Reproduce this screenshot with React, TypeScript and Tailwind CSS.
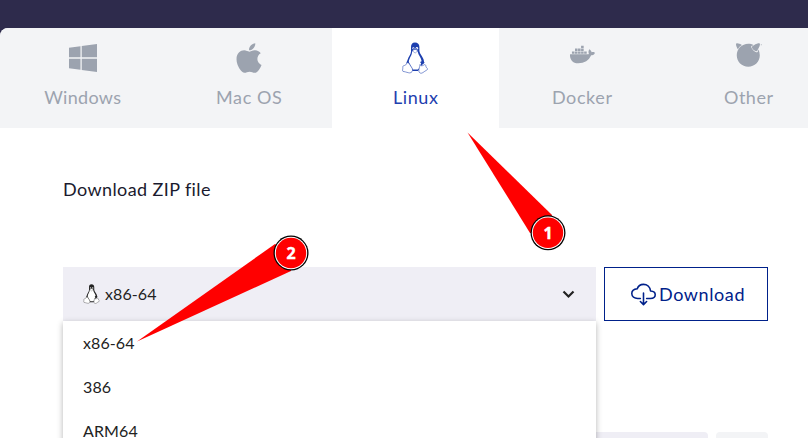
import type { ReactNode } from 'react';
import { FaApple, FaDocker, FaWindows } from 'react-icons/fa';
import { SiFreebsd } from 'react-icons/si';
import { IoCloudDownloadOutline } from 'react-icons/io5';

function Tux({ className }: { className: string }) {
  return (
    <svg viewBox="0 0 26 32" className={className} fill="none">
      <path
        fill="currentColor"
        d="M13 .4C10.300 .4 9 2.200 9 5v4.500c0 3-2.500 5-3.500 8.500L4.300 21l1.700 2 4 6h6l3-5 3-3c.7-5-4.300-8.500-4.600-12V5C17.400 2 15.700.4 13 .4Z"
      />
      <path
        fill="white"
        d="M10.200 9.500c.5-1 1.800-1 2.800-1s2.600.2 2.800 1.400c.5 3.200 3.200 5.200 3.800 9l-1.400 6.300-2.400 2.200h-5L8.700 23.700 6.800 20c.3-4.200 3.100-6 3.400-10.500Z"
      />
      <circle cx="11.400" cy="6.300" r="1.100" fill="white" />
      <circle cx="14.900" cy="6.300" r="1.200" fill="white" />
      <circle cx="11.700" cy="6.500" r=".5" fill="currentColor" />
      <circle cx="14.700" cy="6.500" r=".5" fill="currentColor" />
      <path fill="white" stroke="currentColor" strokeWidth=".4" d="m10.300 8.700 2.700-1.400 3 1.400-2.900 2.400Z" />
      <path
        fill="white"
        stroke="currentColor"
        strokeWidth=".55"
        d="M5.300 20.800c1.400-.6 2.200 1.200 3 2.600.9 1.500 2.500 3 2.200 5-.3 2-2.200 3-4.200 2.300-1.700-.7-3.700-.8-5.400-1.400-.9-.5.100-2-.1-3.700-.1-1.800.7-2 2-2.200 1.600-.3 1.300-2 2.500-2.600Z"
      />
      <path
        fill="white"
        stroke="currentColor"
        strokeWidth=".55"
        d="M18 22.500c.3 1.200 1.900 1.600 3 1 .9-.5 1.500-1.200 2.300-.7.900.6.200 2.200 1.400 3 .9.700 1.200 1.400.2 2.200-1.500 1-2.700 1.500-4 2.600-1.600 1.200-3.700.6-4-1.300-.3-2.300 1-4.600 1.100-6.800Z"
      />
      <path stroke="currentColor" strokeWidth="1.800" d="M18.600 20.800c1.200-.9 2.500-.7 3.400.3" />
    </svg>
  );
}

function Tab({ icon, label, active }: { icon: ReactNode; label: ReactNode; active?: boolean }) {
  return (
    <div
      className={`flex h-[100px] w-[166.5px] shrink-0 flex-col items-center pt-3.5 pl-px ${
        active ? 'bg-white text-[#1e40af]' : 'bg-[#f3f4f6] text-[#9ca3af]'
      }`}
    >
      <div className="flex h-8 items-start justify-center">{icon}</div>
      <div className="mt-[9px] text-lg leading-7 whitespace-nowrap">{label}</div>
    </div>
  );
}

function Marker({ x, y, n }: { x: number; y: number; n: number }) {
  return (
    <g>
      <circle cx={x} cy={y} r="17.500" fill="#000" />
      <circle cx={x} cy={y} r="16.200" fill="#fff" />
      <circle cx={x} cy={y} r="15.200" fill="#f00" />
      <text
        x={x}
        y={y + 6}
        textAnchor="middle"
        fill="#fff"
        stroke="#fff"
        strokeWidth=".4"
        className="font-['Open_Sans',sans-serif] text-base font-bold"
      >
        {n}
      </text>
    </g>
  );
}

export default function App() {
  return (
    <div className="relative h-[438px] w-[808px] overflow-hidden bg-white font-[Lato,sans-serif] text-[#1a1a2e]">
      <div className="bg-[#2e2b4c] pt-7">
        <div className="overflow-hidden rounded-tl-lg bg-[#f3f4f6]">
          <div className="-ml-px flex">
            <Tab icon={<FaWindows className="size-8" />} label={<span className="tracking-[0.3px]">Windows</span>} />
            <Tab icon={<FaApple className="-mt-px size-[34px]" />} label={<span className="tracking-[0.6px]">Mac OS</span>} />
            <Tab active icon={<Tux className="mr-0.5 h-8 w-[26px]" />} label={<span className="tracking-[0.6px]">Linux</span>} />
            <Tab icon={<FaDocker className="size-[25px]" />} label={<span className="tracking-[0.6px]">Docker</span>} />
            <Tab icon={<SiFreebsd className="size-[26px]" />} label={<span className="tracking-[0.5px]">Other</span>} />
          </div>
        </div>
      </div>

      <main className="px-[63px] pt-[47px]">
        <h2 className="text-lg leading-7 tracking-[0.4px]">Download ZIP file</h2>
        <div className="mt-16 flex gap-2">
          <div className="flex h-[54px] w-[533px] shrink-0 items-center bg-[#efeef5] pr-[21px] pl-5 text-base text-[#222]">
            <Tux className="h-5 w-[17px]" />
            <span className="ml-[5px] tracking-[0.1px]">x86-64</span>
            <svg viewBox="0 0 14 10" className="ml-auto h-2.5 w-3.5" fill="none" stroke="currentColor" strokeWidth="2.200">
              <path d="m2.500 2.500 5 5 5-5" />
            </svg>
          </div>
          <button className="flex h-[54px] w-[164px] shrink-0 items-center border border-[#00218a] pl-[25.5px] text-lg text-[#00218a]">
            <IoCloudDownloadOutline className="size-[25px]" />
            <span className="ml-[3.5px] tracking-[0.6px]">Download</span>
          </button>
        </div>
        <div className="mt-[111px] flex gap-2">
          <div className="h-10 w-[645px] shrink-0 rounded-t bg-[#efeef5]" />
          <div className="h-10 w-[52px] shrink-0 rounded-t bg-[#f3f4f6]" />
        </div>
      </main>

      <ul className="absolute top-[321px] left-[63px] w-[533px] bg-white text-base text-[#222] shadow-[0_2px_6px_rgba(0,0,0,0.3)]">
        <li className="flex h-11 items-center pl-5"><span className="tracking-[0.1px]">x86-64</span></li>
        <li className="flex h-11 items-center pl-5"><span className="tracking-[0.1px]">386</span></li>
        <li className="flex h-11 items-center pl-5"><span className="tracking-[0.1px]">ARM64</span></li>
      </ul>

      <svg className="pointer-events-none absolute inset-0" width="808" height="438">
        <path d="M467.500 132.500 552 215 547 233 530 233Z" fill="#f00" />
        <path d="M137 341.500 275 244 291 253 291 271Z" fill="#f00" />
        <Marker x={548} y={232.8} n={1} />
        <Marker x={291} y={253} n={2} />
      </svg>
    </div>
  );
}
